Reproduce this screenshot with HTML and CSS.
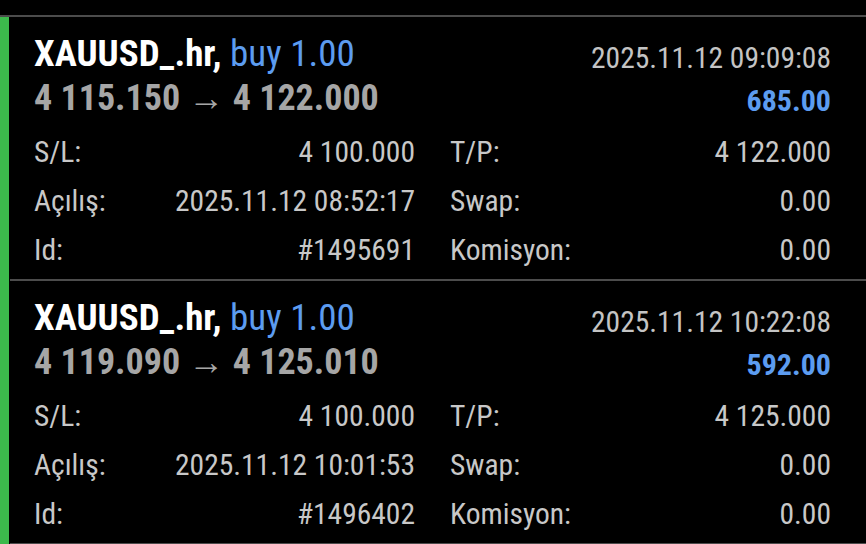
FILE: index.html
```html
<!DOCTYPE html>
<html lang="tr">
<head>
<meta charset="utf-8">
<title>Pozisyonlar</title>
<link rel="stylesheet" href="styles.css">
</head>
<body>
<div class="topbar"></div>
<div class="list">
  <section class="card">
    <div class="head">
      <div class="head-left">
        <div class="title"><span class="sym">XAUUSD_.hr,</span> <span class="side">buy 1.00</span></div>
        <div class="price">4 115.150 → 4 122.000</div>
      </div>
      <div class="head-right">
        <div class="time">2025.11.12 09:09:08</div>
        <div class="profit">685.00</div>
      </div>
    </div>
    <div class="details">
      <div class="row"><span class="lbl">S/L:</span><span class="val">4 100.000</span></div>
      <div class="row"><span class="lbl">T/P:</span><span class="val">4 122.000</span></div>
      <div class="row"><span class="lbl">Açılış:</span><span class="val">2025.11.12 08:52:17</span></div>
      <div class="row"><span class="lbl">Swap:</span><span class="val">0.00</span></div>
      <div class="row"><span class="lbl">Id:</span><span class="val">#1495691</span></div>
      <div class="row"><span class="lbl">Komisyon:</span><span class="val">0.00</span></div>
    </div>
  </section>
  <section class="card">
    <div class="head">
      <div class="head-left">
        <div class="title"><span class="sym">XAUUSD_.hr,</span> <span class="side">buy 1.00</span></div>
        <div class="price">4 119.090 → 4 125.010</div>
      </div>
      <div class="head-right">
        <div class="time">2025.11.12 10:22:08</div>
        <div class="profit">592.00</div>
      </div>
    </div>
    <div class="details">
      <div class="row"><span class="lbl">S/L:</span><span class="val">4 100.000</span></div>
      <div class="row"><span class="lbl">T/P:</span><span class="val">4 125.000</span></div>
      <div class="row"><span class="lbl">Açılış:</span><span class="val">2025.11.12 10:01:53</span></div>
      <div class="row"><span class="lbl">Swap:</span><span class="val">0.00</span></div>
      <div class="row"><span class="lbl">Id:</span><span class="val">#1496402</span></div>
      <div class="row"><span class="lbl">Komisyon:</span><span class="val">0.00</span></div>
    </div>
  </section>
</div>
</body>
</html>
```
FILE: styles.css
```css
html, body {
  margin: 0;
  padding: 0;
  background: #000;
}
body {
  font-family: "Roboto Condensed", "Roboto", "Liberation Sans Narrow", sans-serif;
  font-stretch: condensed;
  color: #c8c8c8;
  overflow: hidden;
}
.topbar {
  height: 15px;
  border-bottom: 2px solid #4c4c4c;
}
.list {
  border-left: 9px solid #3cb94c;
  padding-left: 1px;
}
.card {
  border-bottom: 2px solid #4c4c4c;
  padding: 16px 35px 4px 24px;
}
.head {
  display: flex;
  justify-content: space-between;
}
.title {
  font-size: 37px;
  line-height: 41px;
  font-weight: 700;
  white-space: nowrap;
}
.sym {
  color: #fff;
}
.side {
  color: #5c9cf0;
  font-weight: 400;
}
.price {
  margin-top: 4px;
  font-size: 36px;
  line-height: 41px;
  font-weight: 700;
  color: #a6a6a6;
  white-space: nowrap;
}
.head-right {
  padding-top: 5px;
  text-align: right;
}
.time {
  font-size: 29.5px;
  line-height: 41px;
  color: #c4c4c4;
}
.profit {
  margin-top: 1px;
  font-size: 30px;
  line-height: 41px;
  font-weight: 700;
  color: #5c9cf0;
}
.details {
  margin-top: 7px;
  display: grid;
  grid-template-columns: 1fr 1fr;
  column-gap: 35px;
}
.row {
  display: flex;
  justify-content: space-between;
  font-size: 29.5px;
  line-height: 49px;
  white-space: nowrap;
}
.lbl {
  color: #c8c8c8;
}
.val {
  color: #c8c8c8;
}
```
